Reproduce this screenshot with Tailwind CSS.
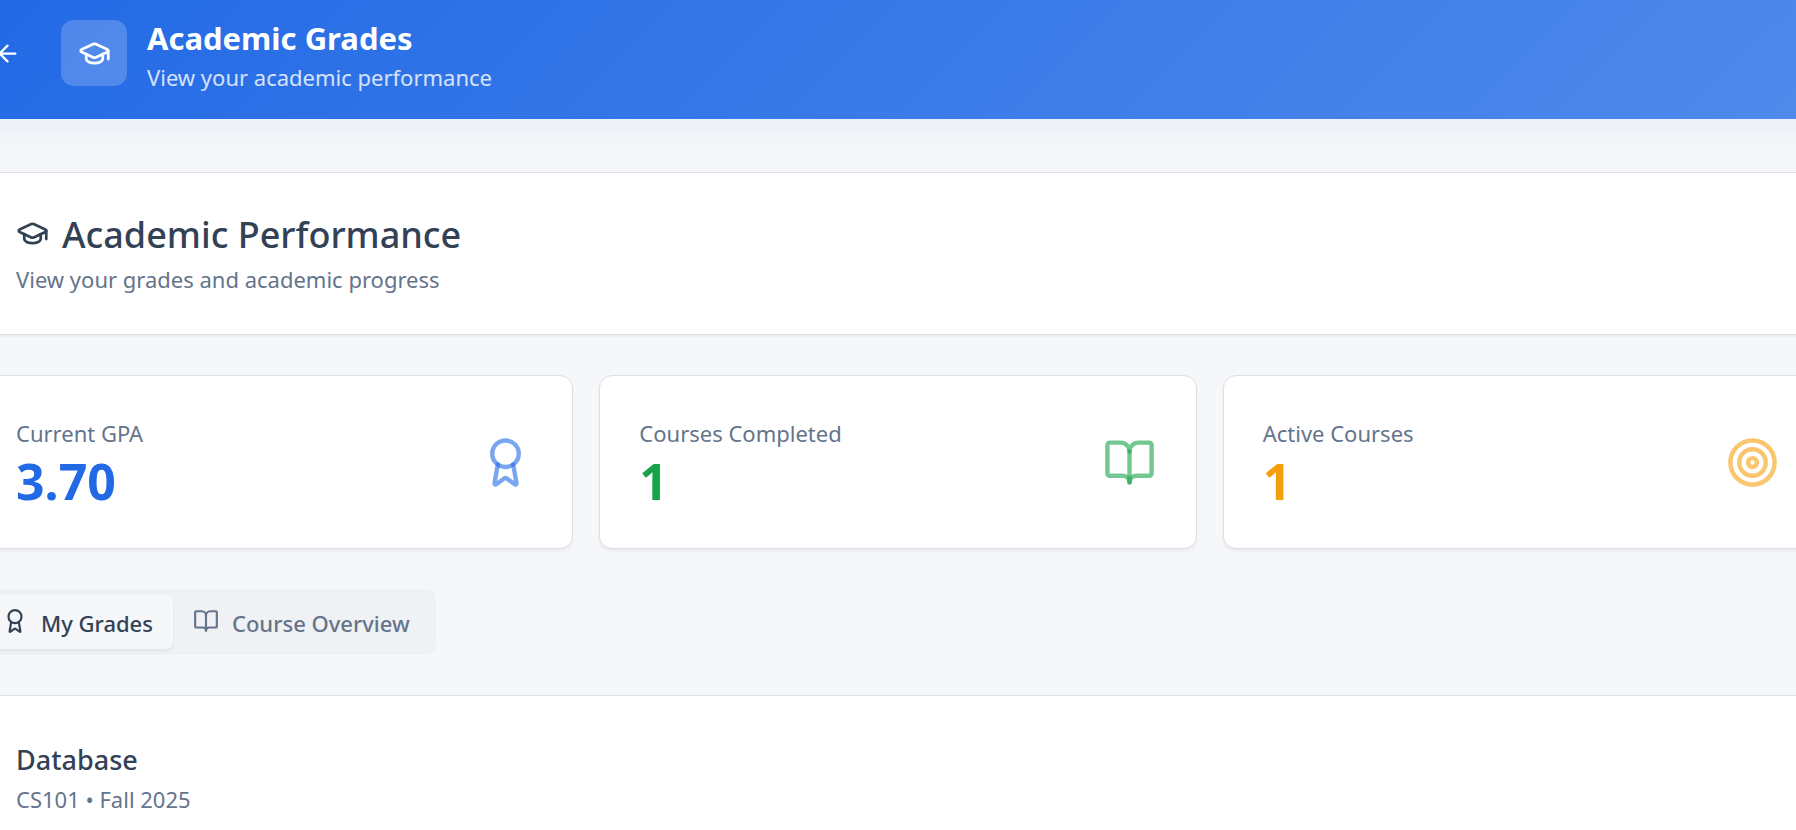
<!DOCTYPE html>
<html lang="en">
<head>
<meta charset="utf-8">
<meta name="viewport" content="width=device-width, initial-scale=1">
<title>Academic Grades</title>
<script src="https://cdn.jsdelivr.net/npm/@tailwindcss/browser@4"></script>
</head>
<body class="bg-[#f6f7f9] font-['Noto_Sans','Open_Sans',sans-serif] text-[22px] leading-[34px] text-[#334155]">
<svg class="hidden" aria-hidden="true">
  <symbol id="cap" viewBox="0 0 24 24"><path d="M21.42 10.922a1 1 0 0 0-.019-1.838L12.83 5.18a2 2 0 0 0-1.66 0L2.6 9.08a1 1 0 0 0 0 1.832l8.57 3.908a2 2 0 0 0 1.66 0z"/><path d="M22 10v6"/><path d="M6 12.5V16a6 3 0 0 0 12 0v-3.5"/></symbol>
  <symbol id="award" viewBox="0 0 24 24"><path d="m15.477 12.89 1.515 8.526a.5.5 0 0 1-.81.47l-3.58-2.687a1 1 0 0 0-1.197 0l-3.586 2.686a.5.5 0 0 1-.81-.469l1.514-8.526"/><circle cx="12" cy="8" r="6"/></symbol>
  <symbol id="book" viewBox="0 0 24 24"><path d="M12 7v14"/><path d="M3 18a1 1 0 0 1-1-1V4a1 1 0 0 1 1-1h5a4 4 0 0 1 4 4 4 4 0 0 1 4-4h5a1 1 0 0 1 1 1v13a1 1 0 0 1-1 1h-6a3 3 0 0 0-3 3 3 3 0 0 0-3-3z"/></symbol>
  <symbol id="target" viewBox="0 0 24 24"><circle cx="12" cy="12" r="10"/><circle cx="12" cy="12" r="6"/><circle cx="12" cy="12" r="2"/></symbol>
  <symbol id="arrow" viewBox="0 0 24 24"><path d="m12 19-7-7 7-7"/><path d="M19 12H5"/></symbol>
</svg>
<div class="flex min-h-screen flex-col overflow-hidden">
  <header class="-mx-[26px] flex items-center bg-linear-135 from-[#2169e5] to-[#4f8aeb] pt-3 pb-[25px] text-white shadow-[0_8px_36px_rgba(33,105,229,0.07)]">
    <button type="button" aria-label="Back" class="mr-5 p-5"><svg class="size-[27px] fill-none stroke-current stroke-2 [stroke-linecap:round] [stroke-linejoin:round]"><use href="#arrow"/></svg></button>
    <div class="mr-5 grid size-[66px] place-items-center rounded-[13px] bg-white/20"><svg class="size-[33px] fill-none stroke-current stroke-2 [stroke-linecap:round] [stroke-linejoin:round]"><use href="#cap"/></svg></div>
    <div>
      <h1 class="pt-1 text-[31px] leading-[44px] font-bold">Academic Grades</h1>
      <p class="text-white/80">View your academic performance</p>
    </div>
  </header>
  <main class="-mx-6 mt-[53px] flex flex-1 flex-col gap-10">
    <section class="rounded-[13px] border border-[#dcdfe8] bg-white px-[39px] pt-[39px] pb-[38px] shadow-[0_2px_3px_rgba(0,0,0,0.05)]">
      <h2 class="flex items-center gap-[13px] text-[36px] leading-[46px] font-medium"><svg class="mb-1 size-[33px] fill-none stroke-current stroke-2 [stroke-linecap:round] [stroke-linejoin:round]"><use href="#cap"/></svg>Academic Performance</h2>
      <p class="mt-1 text-[#64748b]">View your grades and academic progress</p>
    </section>
    <section class="grid grid-cols-3 gap-[26px]">
      <div class="flex items-center justify-between rounded-[13px] border border-[#dcdfe8] bg-white py-10 pr-10 pl-[39px] shadow-[0_2px_3px_rgba(0,0,0,0.05)]">
        <div><p class="text-[#64748b]">Current GPA</p><p class="pt-1 text-[50px] leading-[54px] font-bold text-[#2169e5]">3.70</p></div>
        <svg class="size-[53px] fill-none stroke-[#2169e5]/60 stroke-2 [stroke-linecap:round] [stroke-linejoin:round]"><use href="#award"/></svg>
      </div>
      <div class="flex items-center justify-between rounded-[13px] border border-[#dcdfe8] bg-white py-10 pr-10 pl-[39px] shadow-[0_2px_3px_rgba(0,0,0,0.05)]">
        <div><p class="text-[#64748b]">Courses Completed</p><p class="pt-1 text-[50px] leading-[54px] font-bold text-[#16a34a]">1</p></div>
        <svg class="size-[53px] fill-none stroke-[#16a34a]/60 stroke-2 [stroke-linecap:round] [stroke-linejoin:round]"><use href="#book"/></svg>
      </div>
      <div class="flex items-center justify-between rounded-[13px] border border-[#dcdfe8] bg-white py-10 pr-10 pl-[39px] shadow-[0_2px_3px_rgba(0,0,0,0.05)]">
        <div><p class="text-[#64748b]">Active Courses</p><p class="pt-1 text-[50px] leading-[54px] font-bold text-[#f59e0b]">1</p></div>
        <svg class="size-[53px] fill-none stroke-[#f59e0b]/60 stroke-2 [stroke-linecap:round] [stroke-linejoin:round]"><use href="#target"/></svg>
      </div>
    </section>
    <div role="tablist" class="flex self-start rounded-[10px] bg-[#eff1f4] p-1.5 font-medium">
      <button type="button" role="tab" aria-selected="true" class="flex items-center gap-[13px] rounded-[7px] bg-[#f6f7f9] px-5 pt-[11px] pb-[9px] shadow-[0_2px_3px_rgba(0,0,0,0.06)]"><svg class="mb-1 size-[26px] fill-none stroke-current stroke-2 [stroke-linecap:round] [stroke-linejoin:round]"><use href="#award"/></svg>My Grades</button>
      <button type="button" role="tab" aria-selected="false" class="flex items-center gap-[13px] rounded-[7px] px-5 pt-[11px] pb-[9px] text-[#64748b]"><svg class="mb-1 size-[26px] fill-none stroke-current stroke-2 [stroke-linecap:round] [stroke-linejoin:round]"><use href="#book"/></svg>Course Overview</button>
    </div>
    <section class="flex-1 rounded-t-[13px] border border-b-0 border-[#dcdfe8] bg-white px-[39px] pt-11">
      <h3 class="text-[27px] leading-10 font-medium">Database</h3>
      <p class="mt-0.5 text-[#64748b]">CS101 • Fall 2025</p>
    </section>
  </main>
</div>
</body>
</html>
